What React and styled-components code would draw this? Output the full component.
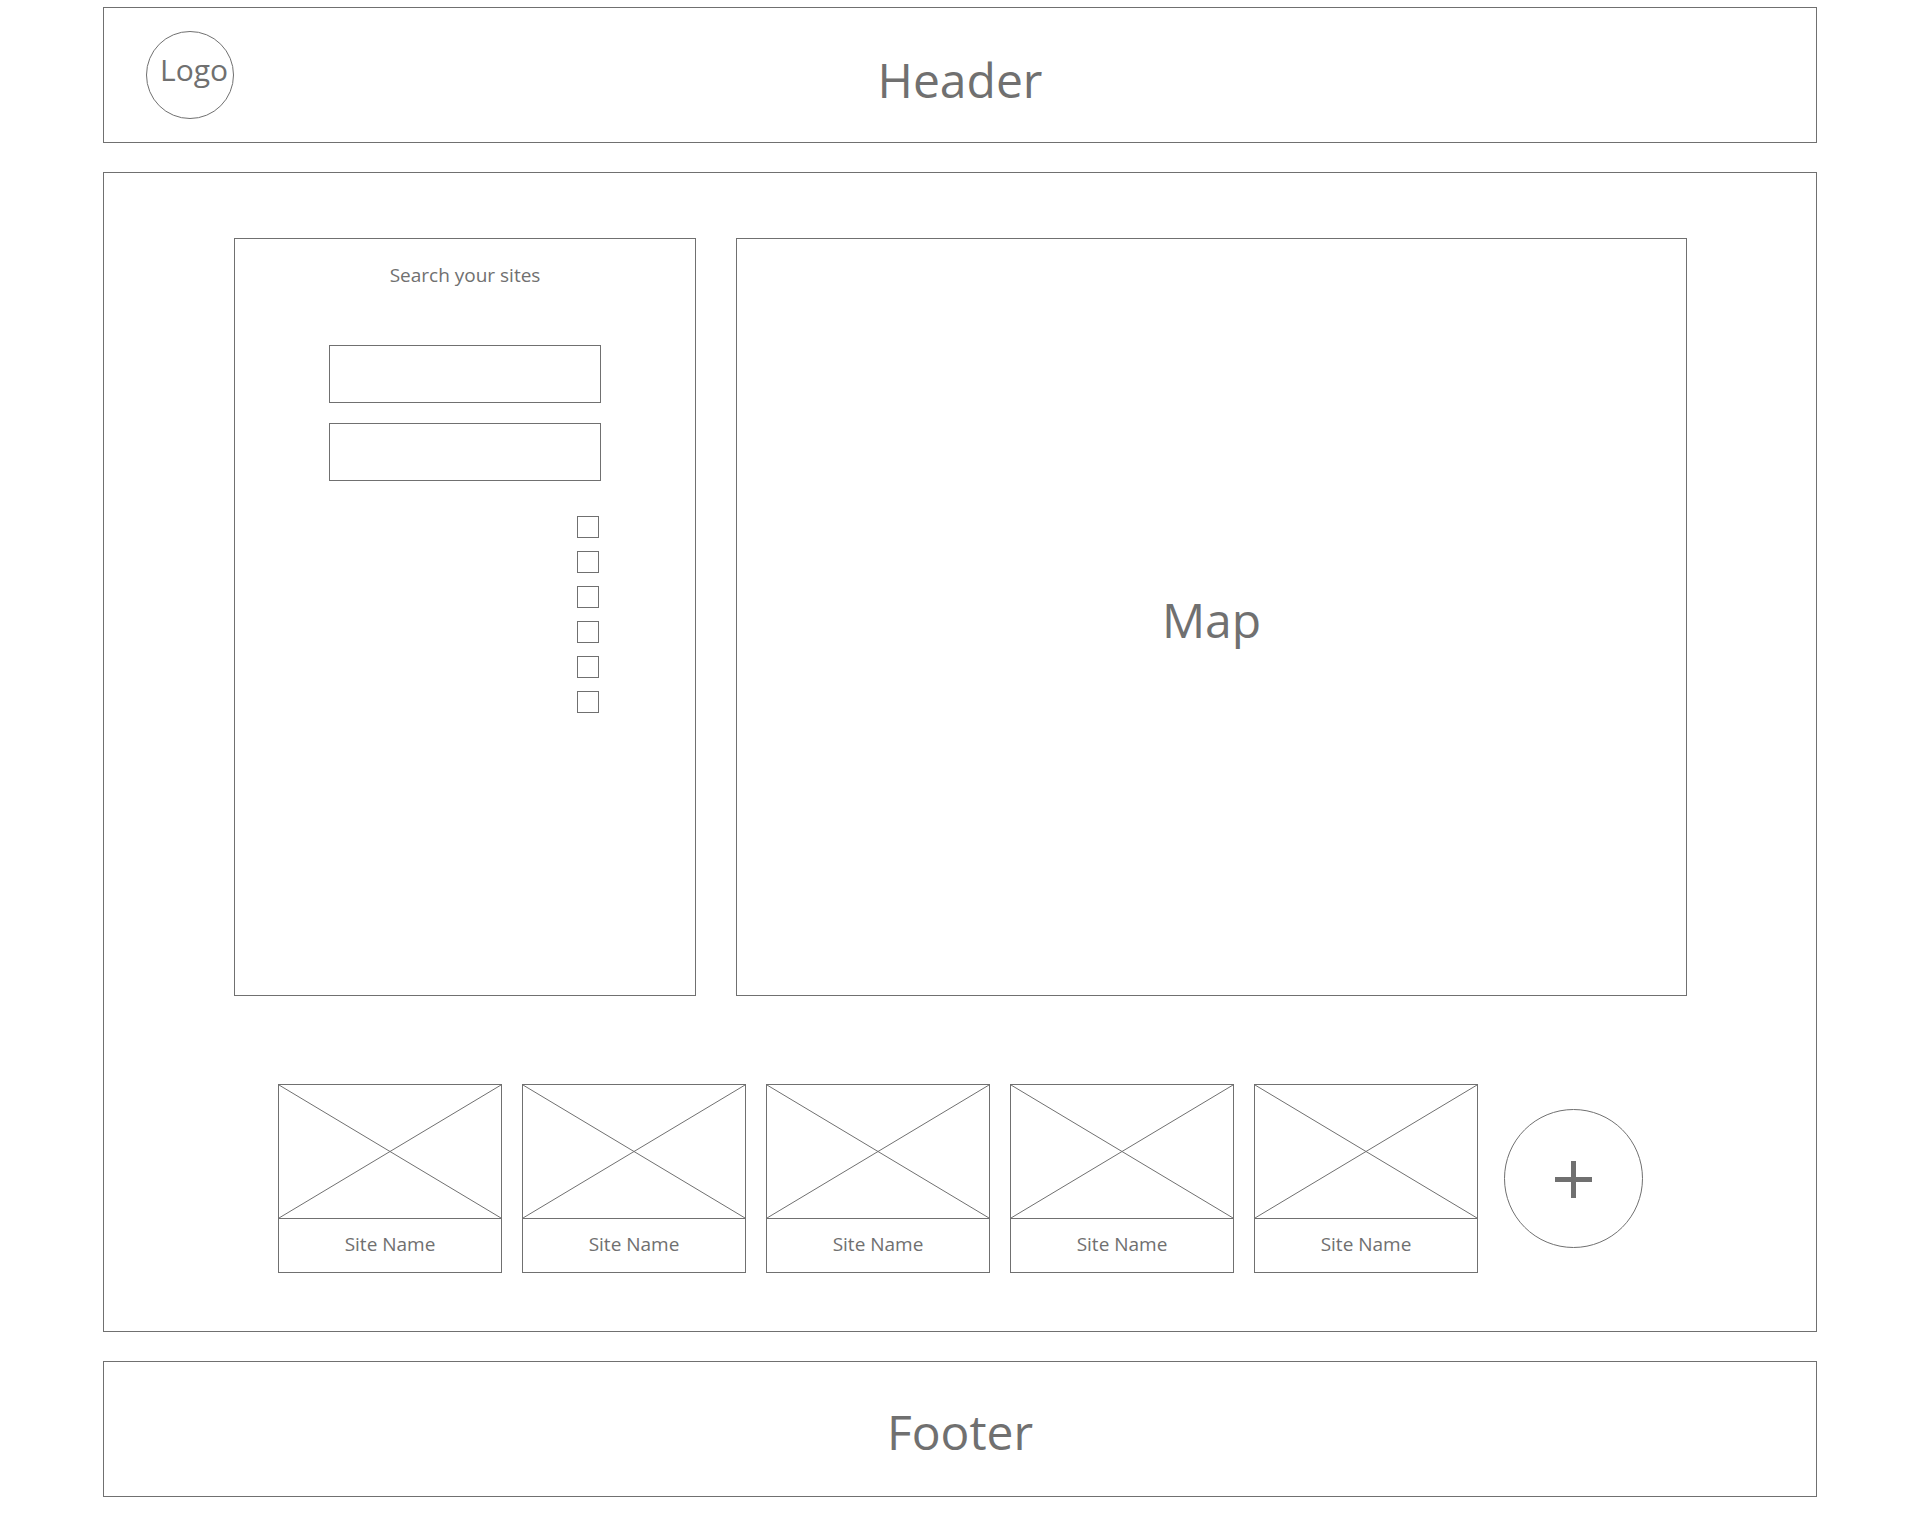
import React from "react";
import styled, { createGlobalStyle } from "styled-components";

const ink = "#707070";

const GlobalStyle = createGlobalStyle`
  *, *::before, *::after { box-sizing: border-box; }
  body {
    margin: 0;
    background: #fff;
    color: ${ink};
    font-family: "Segoe UI", "Open Sans", "Noto Sans", sans-serif;
  }
`;

const Page = styled.div`
  display: flex;
  flex-direction: column;
  gap: 29px;
  padding: 7px 103px 16px;
`;

const Banner = styled.header`
  display: grid;
  grid-template-columns: 1fr auto 1fr;
  align-items: center;
  min-height: 136px;
  padding: 0 42px;
  border: 1px solid ${ink};
`;

const Title = styled.h1`
  grid-column: 2;
  margin: 0;
  padding-top: ${({ $drop }) => $drop || "5px"};
  font-size: 48px;
  font-weight: 400;
  line-height: 64px;
`;

const Logo = styled.a`
  display: flex;
  align-items: center;
  justify-content: center;
  width: 88px;
  height: 88px;
  padding: 0 0 10px 8px;
  border: 1px solid ${ink};
  border-radius: 50%;
  color: inherit;
  font-size: 30px;
  line-height: 40px;
  text-decoration: none;
`;

const Main = styled.main`
  display: flex;
  flex-direction: column;
  gap: 88px;
  padding: 65px 129px 58px 130px;
  border: 1px solid ${ink};
`;

const Workspace = styled.div`
  display: grid;
  grid-template-columns: 462fr 951fr;
  gap: 40px;
  min-height: 758px;
`;

const SearchPanel = styled.form`
  display: flex;
  flex-direction: column;
  align-items: center;
  padding: 23px 24px;
  border: 1px solid ${ink};
`;

const PanelTitle = styled.h2`
  margin: 0 0 57px;
  font-size: 19px;
  font-weight: 400;
  line-height: 26px;
`;

const Fields = styled.div`
  display: flex;
  flex-direction: column;
  gap: 20px;
  width: 272px;
`;

const TextField = styled.input`
  width: 100%;
  height: 58px;
  padding: 0 12px;
  border: 1px solid ${ink};
  border-radius: 0;
  background: #fff;
  color: inherit;
  font: inherit;
`;

const Options = styled.div`
  display: flex;
  flex-direction: column;
  align-items: flex-end;
  gap: 13px;
  width: 272px;
  margin-top: 35px;
  padding-right: 2px;
`;

const Checkbox = styled.input`
  appearance: none;
  width: 22px;
  height: 22px;
  margin: 0;
  border: 1px solid ${ink};
  background: #fff;

  &:checked { background: ${ink}; }
`;

const MapPanel = styled.section`
  display: flex;
  align-items: center;
  justify-content: center;
  border: 1px solid ${ink};
`;

const Sites = styled.div`
  display: flex;
  align-items: center;
  justify-content: center;
  gap: 26px;
`;

const SiteList = styled.div`
  display: flex;
  gap: 20px;
`;

const Card = styled.article`
  width: 224px;
  border: 1px solid ${ink};
`;

const Thumbnail = styled.svg`
  display: block;
  width: 100%;
  height: 134px;
  border-bottom: 1px solid ${ink};
`;

const SiteName = styled.h3`
  margin: 0;
  padding: 12px 0 15px;
  font-size: 19px;
  font-weight: 400;
  line-height: 26px;
  text-align: center;
`;

const AddButton = styled.button`
  display: flex;
  align-items: center;
  justify-content: center;
  width: 139px;
  height: 139px;
  padding: 2px 0 0;
  border: 1px solid ${ink};
  border-radius: 50%;
  background: #fff;
  color: inherit;
  cursor: pointer;
`;

const fields = ["Site name", "Location"];
const options = [1, 2, 3, 4, 5, 6];
const sites = [1, 2, 3, 4, 5];

function SiteCard() {
  return (
    <Card>
      <Thumbnail viewBox="0 0 222 133" preserveAspectRatio="none" aria-hidden="true">
        <path d="M0 0L222 133M222 0L0 133" stroke={ink} fill="none" />
      </Thumbnail>
      <SiteName>Site Name</SiteName>
    </Card>
  );
}

export default function App() {
  return (
    <>
      <GlobalStyle />
      <Page>
        <Banner>
          <Logo href="#">Logo</Logo>
          <Title $drop="10px">Header</Title>
        </Banner>
        <Main>
          <Workspace>
            <SearchPanel>
              <PanelTitle>Search your sites</PanelTitle>
              <Fields>
                {fields.map((name) => (
                  <TextField key={name} type="text" aria-label={name} />
                ))}
              </Fields>
              <Options>
                {options.map((n) => (
                  <Checkbox key={n} type="checkbox" aria-label={`Filter ${n}`} />
                ))}
              </Options>
            </SearchPanel>
            <MapPanel>
              <Title as="h2">Map</Title>
            </MapPanel>
          </Workspace>
          <Sites>
            <SiteList>
              {sites.map((n) => (
                <SiteCard key={n} />
              ))}
            </SiteList>
            <AddButton type="button" aria-label="Add site">
              <svg width="37" height="37" viewBox="0 0 37 37" aria-hidden="true">
                <path d="M18.5 0V37M0 18.5H37" stroke="currentColor" strokeWidth="5" />
              </svg>
            </AddButton>
          </Sites>
        </Main>
        <Banner as="footer">
          <Title as="p">Footer</Title>
        </Banner>
      </Page>
    </>
  );
}
